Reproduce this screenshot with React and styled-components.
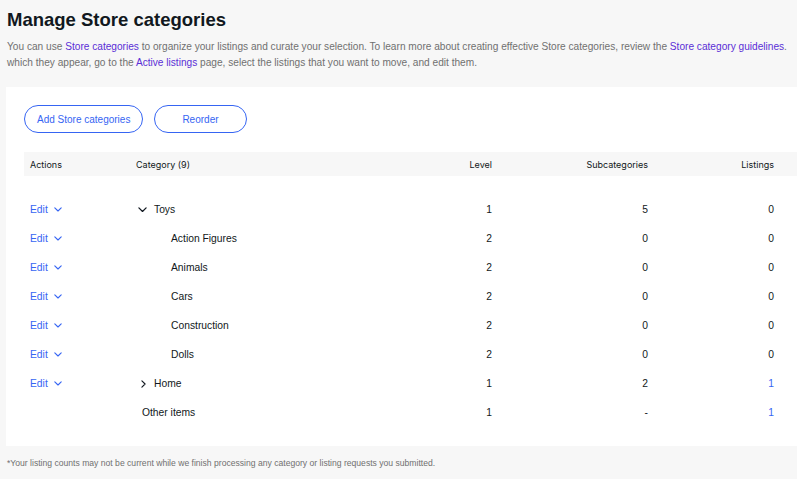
import React from 'react';
import styled, { createGlobalStyle } from 'styled-components';

const GlobalStyle = createGlobalStyle`
  html, body {
    margin: 0;
    padding: 0;
    background: #f7f7f7;
    overflow: hidden;
  }
  body {
    font-family: "Liberation Sans", Arial, sans-serif;
    color: #111820;
  }
`;

const Page = styled.div`
  width: 840px;
  padding: 9px 0 0 6px;
`;

const Title = styled.h1`
  margin: 0 0 0 1px;
  font-size: 18.5px;
  line-height: 22px;
  font-weight: 700;
  color: #111820;
`;

const Intro = styled.p`
  margin: 8px 0 0 1px;
  font-size: 10.15px;
  line-height: 16px;
  color: #707070;
  white-space: nowrap;
`;

const Link = styled.a`
  color: #5a2ed6;
  text-decoration: none;
`;

const Card = styled.section`
  margin-top: 16px;
  background: #fff;
  padding: 18px 0 19px 18px;
`;

const Toolbar = styled.div`
  display: flex;
  gap: 11px;
  margin-bottom: 19px;
`;

const PillButton = styled.button`
  height: 28px;
  padding: 0 ${p => p.$pad}px;
  border: 1px solid #3665f3;
  border-radius: 14px;
  background: #fff;
  color: #3665f3;
  font-family: "Liberation Sans", Arial, sans-serif;
  font-size: 10px;
`;

const Grid = styled.div`
  display: grid;
  grid-template-columns: 106px 290px 78px 156px 126px 1fr;
`;

const HeadRow = styled.div`
  display: contents;
  & > div {
    background: #f7f7f7;
    height: 24px;
    display: flex;
    align-items: center;
    font-family: Inter, "Liberation Sans", sans-serif;
    font-size: 9px;
    color: #111820;
    margin-bottom: 19px;
  }
`;

const Cell = styled.div`
  height: 29px;
  display: flex;
  align-items: center;
  padding: 0 6px;
  font-size: 10.3px;
  justify-content: ${p => (p.$right ? 'flex-end' : 'flex-start')};
  color: ${p => (p.$blue ? '#3665f3' : '#111820')};
`;

const HeadCell = styled(Cell)``;

const EditBtn = styled.span`
  color: #3665f3;
  display: inline-flex;
  align-items: center;
  gap: 6px;
`;

const Name = styled.span`
  display: inline-flex;
  align-items: center;
  padding-left: ${p => p.$indent}px;
  gap: ${p => p.$gap || 7}px;
`;

const Footnote = styled.p`
  margin: 12px 0 0 1px;
  font-size: 8.6px;
  color: #707070;
`;

const ChevronDown = ({ size = 8, color = '#3665f3' }) => (
  <svg width={size} height={size * 0.6} viewBox="0 0 10 6" fill="none">
    <path d="M1 1l4 4 4-4" stroke={color} strokeWidth="1.4" strokeLinecap="round" strokeLinejoin="round" />
  </svg>
);

const ChevronRight = () => (
  <svg width="5" height="8" viewBox="0 0 6 10" fill="none">
    <path d="M1 1l4 4-4 4" stroke="#111820" strokeWidth="1.4" strokeLinecap="round" strokeLinejoin="round" />
  </svg>
);

const rows = [
  { name: 'Toys', kind: 'open', level: 1, subs: '5', listings: '0', edit: true },
  { name: 'Action Figures', kind: 'child', level: 2, subs: '0', listings: '0', edit: true },
  { name: 'Animals', kind: 'child', level: 2, subs: '0', listings: '0', edit: true },
  { name: 'Cars', kind: 'child', level: 2, subs: '0', listings: '0', edit: true },
  { name: 'Construction', kind: 'child', level: 2, subs: '0', listings: '0', edit: true },
  { name: 'Dolls', kind: 'child', level: 2, subs: '0', listings: '0', edit: true },
  { name: 'Home', kind: 'closed', level: 1, subs: '2', listings: '1', edit: true, link: true },
  { name: 'Other items', kind: 'plain', level: 1, subs: '-', listings: '1', edit: false, link: true },
];

const renderName = r => {
  if (r.kind === 'open') {
    return (
      <Name $indent={2}>
        <ChevronDown color="#111820" size={9} />
        {r.name}
      </Name>
    );
  }
  if (r.kind === 'closed') {
    return (
      <Name $indent={5} $gap={8}>
        <ChevronRight />
        {r.name}
      </Name>
    );
  }
  if (r.kind === 'child') return <Name $indent={35}>{r.name}</Name>;
  return <Name $indent={6}>{r.name}</Name>;
};

export default function App() {
  return (
    <Page>
      <GlobalStyle />
      <Title>Manage Store categories</Title>
      <Intro>
        You can use <Link>Store categories</Link> to organize your listings and curate your selection. To learn more about creating effective Store categories, review the <Link>Store category guidelines</Link>.
        <br />
        which they appear, go to the <Link>Active listings</Link> page, select the listings that you want to move, and edit them.
      </Intro>
      <Card>
        <Toolbar>
          <PillButton $pad={12}>Add Store categories</PillButton>
          <PillButton $pad={27}>Reorder</PillButton>
        </Toolbar>
        <Grid>
          <HeadRow>
            <HeadCell>Actions</HeadCell>
            <HeadCell>Category (9)</HeadCell>
            <HeadCell $right>Level</HeadCell>
            <HeadCell $right>Subcategories</HeadCell>
            <HeadCell $right>Listings</HeadCell>
            <HeadCell />
          </HeadRow>
          {rows.map(r => (
            <React.Fragment key={r.name}>
              <Cell>
                {r.edit && (
                  <EditBtn>
                    Edit <ChevronDown />
                  </EditBtn>
                )}
              </Cell>
              <Cell>{renderName(r)}</Cell>
              <Cell $right>{r.level}</Cell>
              <Cell $right>{r.subs}</Cell>
              <Cell $right $blue={r.link}>{r.listings}</Cell>
              <Cell />
            </React.Fragment>
          ))}
        </Grid>
      </Card>
      <Footnote>*Your listing counts may not be current while we finish processing any category or listing requests you submitted.</Footnote>
    </Page>
  );
}
